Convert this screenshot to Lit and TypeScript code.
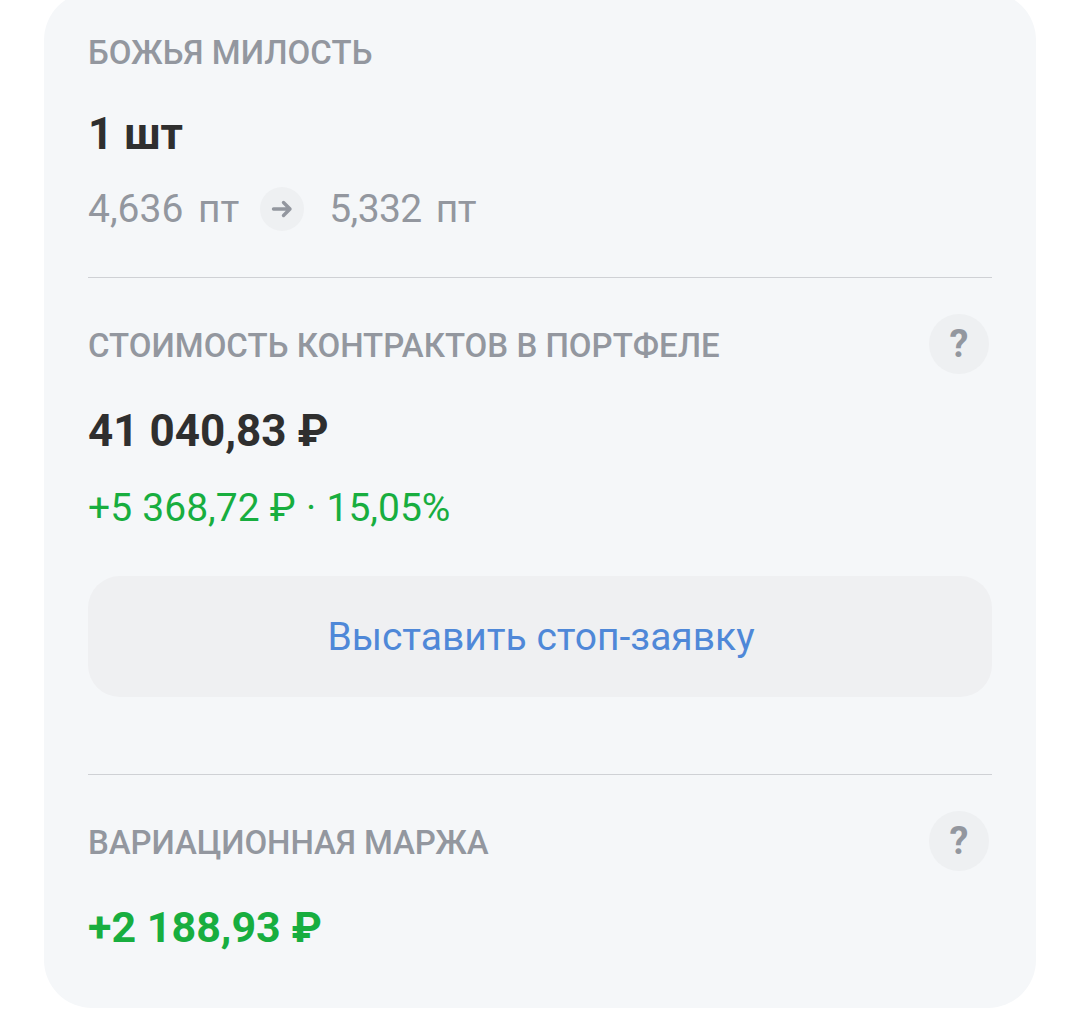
import { LitElement, html, css } from "lit";
import { customElement } from "lit/decorators.js";

@customElement("app-root")
export class AppRoot extends LitElement {
  static styles = css`
    :host { display: block; width: 1080px; height: 1029px; overflow: hidden; background: #fff; font-family: Roboto, "Noto Sans", sans-serif; }
    .card { box-sizing: border-box; width: 992px; height: 1016px; margin: -8px 0 0 44px; padding: 0 44px; background: #f5f7f9; border-radius: 48px; display: flex; flex-direction: column; }
    .label { font-size: 33px; line-height: 36px; font-weight: 500; color: #93979f; }
    .first { margin-top: 43px; }
    .row .label { margin-top: 4px; }
    .r2 .label { letter-spacing: -0.1px; }
    .value { font-size: 44px; line-height: 48px; font-weight: 700; color: #2f2f2f; }
    .qty { margin-top: 39px; }
    .points { display: flex; align-items: center; margin-top: 29px; font-size: 39px; line-height: 44px; color: #93979f; word-spacing: 5px; }
    .narrow { letter-spacing: -0.6px; margin-left: -1px; }
    .arrow { width: 44px; height: 44px; border-radius: 50%; background: #eef0f2; margin: 0 26px 0 21px; display: flex; align-items: center; justify-content: center; }
    .rule { height: 1px; background: #cfd1d5; flex: none; }
    .rule.a { margin-top: 46px; }
    .row { display: flex; align-items: center; justify-content: space-between; }
    .help { width: 60px; height: 60px; border-radius: 50%; background: #eef0f2; color: #93979f; font-size: 38px; font-weight: 700; display: flex; align-items: center; justify-content: center; margin-right: 3px; }
    .row.r1 { margin-top: 36px; }
    .v2 { margin-top: 33px; }
    .gain { margin-top: 31px; font-size: 39px; line-height: 44px; color: #18ae3f; word-spacing: 0.6px; }
    .btn { margin-top: 46px; height: 121px; border-radius: 32px; background: #eff0f2; color: #4f88d8; font-size: 39px; display: flex; align-items: center; justify-content: center; padding-left: 2px; }
    .rule.b { margin-top: 77px; }
    .row.r2 { margin-top: 36px; }
    .v3 { margin-top: 32px; font-size: 43px; color: #18ae3f; }
  `;
  render() {
    const arrow = html`<svg width="22" height="22" viewBox="0 0 22 22" fill="none" stroke="#93979f" stroke-width="3.4" stroke-linecap="round" stroke-linejoin="round"><path d="M2.500 11H19M12.500 4.500 19 11l-6.500 6.500"/></svg>`;
    return html`
      <div class="card">
        <div class="label first">БОЖЬЯ МИЛОСТЬ</div>
        <div class="value qty">1 шт</div>
        <div class="points"><span>4,636 пт</span><span class="arrow">${arrow}</span><span class="narrow">5,332 пт</span></div>
        <div class="rule a"></div>
        <div class="row r1"><span class="label">СТОИМОСТЬ КОНТРАКТОВ В ПОРТФЕЛЕ</span><span class="help">?</span></div>
        <div class="value v2">41 040,83 ₽</div>
        <div class="gain">+5 368,72 ₽ · 15,05%</div>
        <div class="btn">Выставить стоп-заявку</div>
        <div class="rule b"></div>
        <div class="row r2"><span class="label">ВАРИАЦИОННАЯ МАРЖА</span><span class="help">?</span></div>
        <div class="value v3">+2 188,93 ₽</div>
      </div>
    `;
  }
}
